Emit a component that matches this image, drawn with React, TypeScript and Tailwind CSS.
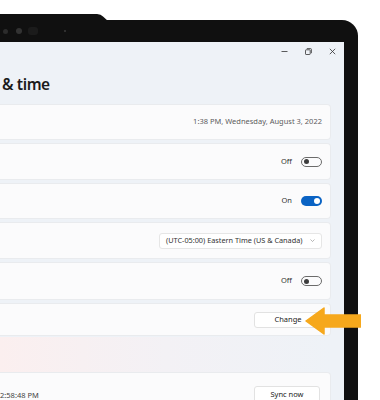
const font = { fontFamily: '"Noto Sans", "Open Sans", sans-serif' };

function Toggle({ on }: { on: boolean }) {
  return on ? (
    <span className="flex h-[10px] w-[21px] items-center justify-end rounded-full bg-[#0a63c4] pr-[2px]">
      <span className="h-[6px] w-[6px] rounded-full bg-white" />
    </span>
  ) : (
    <span className="flex h-[10px] w-[21px] items-center rounded-full border border-[#6b6b6b] pl-[2px]">
      <span className="h-[5px] w-[5px] rounded-full bg-[#3d3d3d]" />
    </span>
  );
}

function Card({ children, h }: { children: React.ReactNode; h: string }) {
  return (
    <div className={`${h} flex shrink-0 items-center justify-end rounded-r-[4px] border border-l-0 border-[#e9ebee] bg-[#fbfbfc] pr-[8px]`}>
      {children}
    </div>
  );
}

export default function App() {
  return (
    <div className="h-[400px] w-[380px] overflow-hidden bg-white pt-[20px]" style={font}>
      <div className="relative h-[380px] w-[358px] rounded-tr-[16px] bg-[#101010] pr-[14px]">
        {/* camera bump on the top bezel */}
        <svg className="absolute left-0 top-[-6px]" width="110" height="7" viewBox="0 0 110 7">
          <path d="M0 0 H97 Q101 0 103 2.5 L108 7 H0 Z" fill="#101010" />
        </svg>

        <div className="flex h-[22px] items-center">
          <span className="ml-[3px] h-[5px] w-[5px] rounded-full bg-[#2c2c2c]" />
          <span className="ml-[8px] h-[6px] w-[6px] rounded-full bg-[#333]" />
          <span className="ml-[6px] h-[8px] w-[10px] rounded-[3px] bg-[#1b1b1b]" />
          <span className="ml-[26px] h-[2px] w-[2px] rounded-full bg-[#3a3a3a]" />
        </div>

        <div className="h-[358px] w-[344px] bg-[#eef2f7] pr-[13px]">
          {/* window controls */}
          <div className="-mr-[13px] flex h-[18px] justify-end">
            <div className="flex w-[24px] items-center justify-center">
              <svg width="7" height="7" viewBox="0 0 7 7">
                <path d="M0.5 3.5 H6.5" stroke="#333" strokeWidth="0.8" />
              </svg>
            </div>
            <div className="flex w-[24px] items-center justify-center">
              <svg width="7" height="7" viewBox="0 0 7 7" fill="none" stroke="#333" strokeWidth="0.8">
                <rect x="0.5" y="1.8" width="4.7" height="4.7" rx="0.6" />
                <path d="M1.8 0.6 H5.6 Q6.4 0.6 6.4 1.4 V5.2" />
              </svg>
            </div>
            <div className="flex w-[24px] items-center justify-center">
              <svg width="7" height="7" viewBox="0 0 7 7">
                <path d="M0.8 0.8 L6.2 6.2 M6.2 0.8 L0.8 6.2" stroke="#333" strokeWidth="0.8" />
              </svg>
            </div>
          </div>

          <div className="mt-[14px] pl-[2px] text-[15.5px] font-semibold leading-[20px] tracking-[-0.4px] text-[#1b1b1b]">&amp; time</div>

          <div className="mt-[10px] flex flex-col gap-[3px]">
            <Card h="h-[36px]">
              <span className="text-[7.5px] text-[#5c5c5c]">1:38 PM, Wednesday, August 3, 2022</span>
            </Card>
            <Card h="h-[37px]">
              <span className="mr-[9px] text-[7.5px] text-[#333]">Off</span>
              <Toggle on={false} />
            </Card>
            <Card h="h-[36px]">
              <span className="mr-[9px] text-[7.5px] text-[#333]">On</span>
              <Toggle on />
            </Card>
            <Card h="h-[37px]">
              <div className="flex h-[16px] w-[163px] items-center justify-between rounded-[3px] border border-[#e6e6e6] bg-white pl-[6px] pr-[6px]">
                <span className="text-[7.3px] text-[#333]">(UTC-05:00) Eastern Time (US &amp; Canada)</span>
                <svg width="5" height="3" viewBox="0 0 5 3">
                  <path d="M0.5 0.5 L2.5 2.5 L4.5 0.5" fill="none" stroke="#888" strokeWidth="0.6" />
                </svg>
              </div>
            </Card>
            <Card h="h-[38px]">
              <span className="mr-[9px] text-[7.5px] text-[#333]">Off</span>
              <Toggle on={false} />
            </Card>
            <Card h="h-[33px]">
              <div className="relative">
                <div className="flex h-[16px] w-[68px] items-center justify-center rounded-[3px] border border-[#e2e2e2] bg-white text-[7.5px] text-[#222]">
                  Change
                </div>
                {/* callout arrow */}
                <svg className="absolute left-[51px] top-[-5px] z-10" width="56" height="28" viewBox="0 0 56 28">
                  <path d="M1 14 L19 1 V8 H56 V20 H19 V27 Z" fill="#f6a81c" strokeLinejoin="round" stroke="#f6a81c" strokeWidth="1.5" />
                </svg>
              </div>
            </Card>
          </div>

          <div className="mt-[1px] h-[35px] bg-gradient-to-r from-[#fbefef] via-[#f3f1f5] to-[#eef2f7]" />

          <div className="flex h-[40px] items-start justify-between rounded-r-[4px] border border-l-0 border-[#e9ebee] bg-[#fbfbfc] pr-[10px] pt-[13px]">
            <span className="mt-[4px] text-[7.5px] leading-[10px] text-[#444]">2:58:48 PM</span>
            <div className="flex h-[17px] w-[66px] items-center justify-center rounded-[3px] border border-[#e2e2e2] bg-white text-[7.5px] text-[#222]">
              Sync now
            </div>
          </div>
        </div>
      </div>
    </div>
  );
}
